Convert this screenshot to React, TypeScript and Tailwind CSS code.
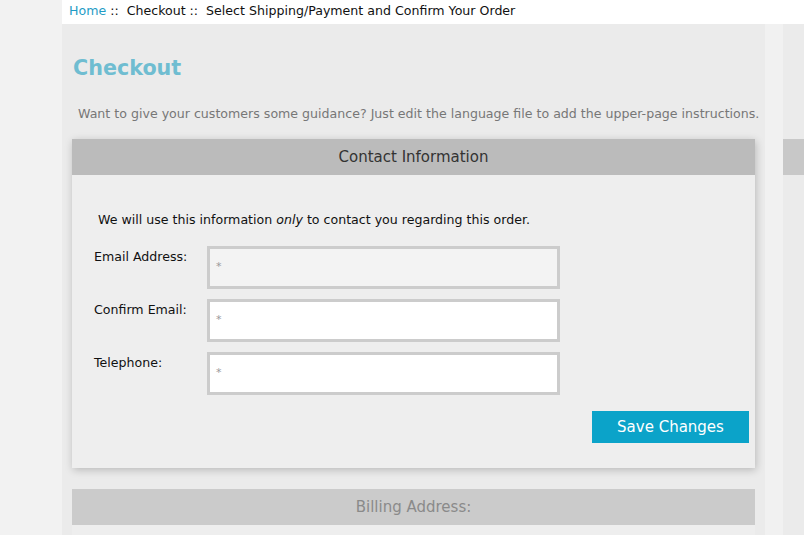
import React from "react";

const font = { fontFamily: '"DejaVu Sans", Verdana, sans-serif' };

function Field({ label, bg }: { label: string; bg: string }) {
  return (
    <div className="flex items-start shrink-0">
      <div className="w-[113px] pt-[2px] text-[12.6px] text-[#111]">{label}</div>
      <div className={`w-[353px] h-[43px] border-[3px] border-[#cccccc] ${bg} flex items-center pl-[6px]`}>
        <span className="text-[11px] text-[#999]">*</span>
      </div>
    </div>
  );
}

export default function App() {
  return (
    <div className="w-[804px] h-[535px] overflow-hidden flex bg-[#f2f2f2]" style={font}>
      <div className="w-[62px] shrink-0 bg-[#f2f2f2]" />
      <div className="flex-1 flex flex-col bg-[#ebebeb] min-h-0">
        <div className="h-[24px] shrink-0 bg-white pl-[7px] pb-[2px] flex items-center text-[12.6px] text-[#111] whitespace-nowrap">
          <span className="text-[#1f9cc6]">Home</span>
          <span>&nbsp;::&nbsp; Checkout ::&nbsp; Select Shipping/Payment and Confirm Your Order</span>
        </div>
        <div className="flex shrink-0">
          <div className="w-[703px] shrink-0 pl-[10px]">
            <h1 className="mt-[32px] pl-[1px] text-[20.7px] font-bold text-[#6fbdd1] leading-[24px]">Checkout</h1>
            <p className="mt-[26px] pl-[6px] text-[12.6px] text-[#777] whitespace-nowrap leading-[16px]">
              Want to give your customers some guidance? Just edit the language file to add the upper-page instructions.
            </p>
            <div className="mt-[17px] w-[683px] bg-[#eeeeee] shadow-[1px_2px_8px_rgba(0,0,0,0.22)]">
              <div className="h-[36px] bg-[#bbbbbb] flex items-center justify-center text-[15px] text-[#333]">
                Contact Information
              </div>
              <div className="pl-[22px] pr-[6px] pt-[37px] pb-[25px]">
                <p className="pl-[4px] text-[12.6px] text-[#111] leading-[16px]">
                  We will use this information <em>only</em> to contact you regarding this order.
                </p>
                <div className="mt-[18px] flex flex-col gap-[10px]">
                  <Field label="Email Address:" bg="bg-[#f3f3f3]" />
                  <Field label="Confirm Email:" bg="bg-white" />
                  <Field label="Telephone:" bg="bg-white" />
                </div>
                <div className="mt-[16px] flex justify-end">
                  <button className="w-[157px] h-[32px] bg-[#0ba3c9] text-white text-[15px]">Save Changes</button>
                </div>
              </div>
            </div>
            <div className="mt-[21px] w-[683px] bg-[#eeeeee]">
              <div className="h-[36px] bg-[#cbcbcb] flex items-center justify-center text-[15px] text-[#8a8a8a]">
                Billing Address:
              </div>
              <div className="h-[40px]" />
            </div>
          </div>
          <div className="w-[18px] shrink-0 bg-[#f1f1f1]" />
          <div className="flex-1">
            <div className="mt-[115px] h-[36px] bg-[#c8c8c8]" />
          </div>
        </div>
      </div>
    </div>
  );
}
